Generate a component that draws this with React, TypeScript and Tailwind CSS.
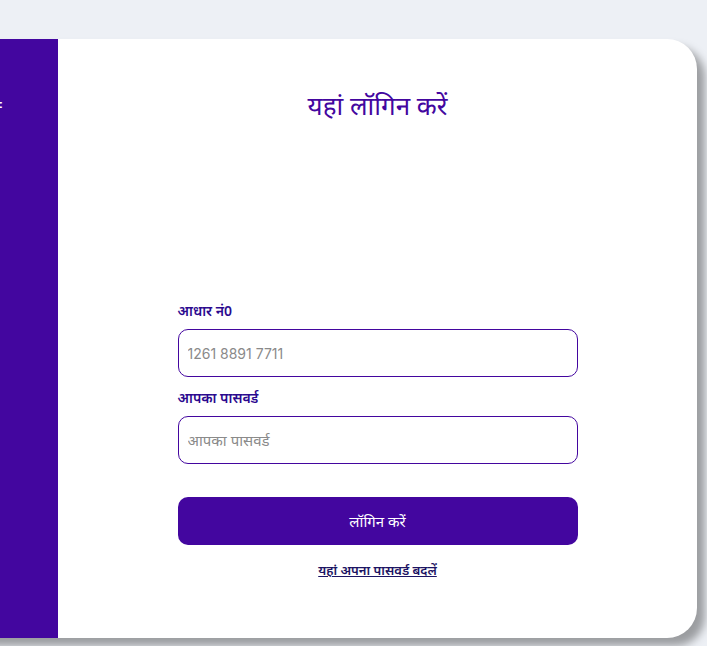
import React from "react";

export default function App() {
  return (
    <div className="min-h-screen w-full overflow-hidden bg-[#edf0f5] pt-[39px] font-['Noto_Sans',sans-serif]">
      <div className="ml-[-242px] flex h-[599px] w-[939px] overflow-hidden rounded-[30px] bg-white shadow-[8px_8px_8px_rgba(0,0,0,0.35)]">
        <div className="flex w-[300px] shrink-0 flex-col items-end bg-[#43069f] pr-[55px] pt-[50px]">
          <h2 className="whitespace-nowrap text-[22px] leading-[30px] text-white">स्वागत है =</h2>
        </div>
        <div className="flex flex-1 flex-col items-center pt-[48px]">
          <h1 className="text-[26px] leading-[36px] text-[#43069f]">यहां लॉगिन करें</h1>
          <form className="mt-[178px] flex w-[400px] flex-col">
            <label className="text-[14px] font-semibold leading-[20px] text-[#2c0a8f]">आधार नं0</label>
            <input
              className="mt-[8px] h-[48px] rounded-[10px] border border-[#43069f] px-[9px] font-['Inter',sans-serif] text-[14px] outline-none placeholder:text-[#8a8a8a]"
              placeholder="1261 8891 7711"
            />
            <label className="mt-[11px] text-[14px] font-semibold leading-[20px] text-[#2c0a8f]">आपका पासवर्ड</label>
            <input
              type="password"
              className="mt-[8px] h-[48px] rounded-[10px] border border-[#43069f] px-[9px] text-[15px] outline-none placeholder:text-[#8a8a8a]"
              placeholder="आपका पासवर्ड"
            />
            <button
              type="button"
              className="mt-[33px] h-[48px] rounded-[10px] bg-[#43069f] text-[15px] text-white"
            >
              लॉगिन करें
            </button>
            <a href="#" className="mt-[16px] self-center text-[13px] font-semibold text-[#1c1464] underline">
              यहां अपना पासवर्ड बदलें
            </a>
          </form>
        </div>
      </div>
    </div>
  );
}
